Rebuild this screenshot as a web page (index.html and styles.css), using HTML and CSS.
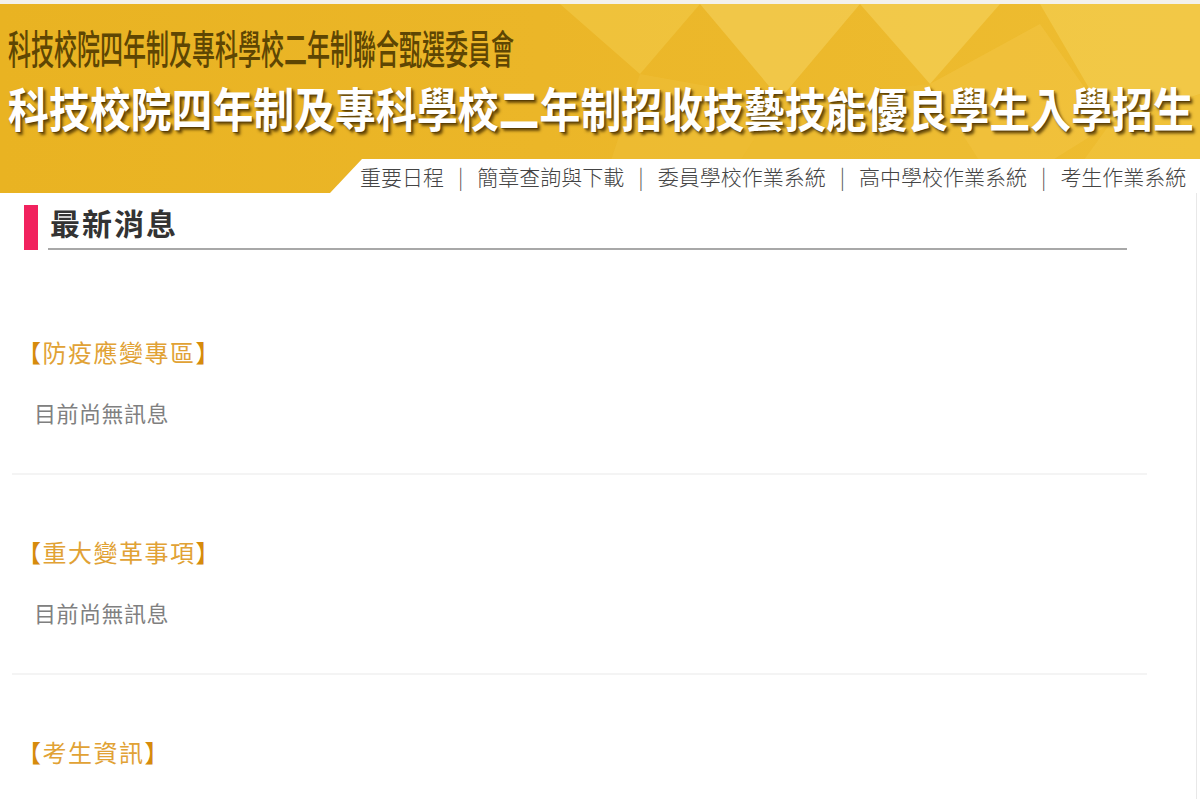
FILE: index.html
```html
<!DOCTYPE html>
<html lang="zh-Hant">
<head>
    <meta charset="UTF-8">
    <meta name="viewport" content="width=device-width, initial-scale=1.0">
    <title>科技校院四年制及專科學校二年制招收技藝技能優良學生入學招生</title>
    <link rel="stylesheet" href="styles.css">
</head>
<body>

<header class="banner">
    <svg class="banner-deco" width="1200" height="189" viewBox="0 0 1200 189" aria-hidden="true">
        <polygon points="560,0 700,0 640,70" fill="#f4cd4e" opacity="0.5"/>
        <polygon points="700,0 860,0 780,95" fill="#f6d460" opacity="0.55"/>
        <polygon points="640,70 780,95 720,189 600,189" fill="#f0c23c" opacity="0.45"/>
        <polygon points="860,0 1000,0 930,80" fill="#f7d866" opacity="0.5"/>
        <polygon points="930,80 1040,20 1110,120 1000,189" fill="#f3c849" opacity="0.45"/>
        <polygon points="1040,0 1200,0 1200,90 1110,120" fill="#f6d35c" opacity="0.5"/>
        <polygon points="1110,120 1200,90 1200,189 1060,189" fill="#f2c744" opacity="0.45"/>
        <polygon points="780,95 930,80 1000,189 720,189" fill="#efc03a" opacity="0.35"/>
    </svg>
    <div class="org"><span>科技校院四年制及專科學校二年制聯合甄選委員會</span></div>
    <div class="slogan"><span>科技校院四年制及專科學校二年制招收技藝技能優良學生入學招生</span></div>
    <nav class="topnav">
        <a href="#">重要日程</a><span class="sep">|</span>
        <a href="#">簡章查詢與下載</a><span class="sep">|</span>
        <a href="#">委員學校作業系統</a><span class="sep">|</span>
        <a href="#">高中學校作業系統</a><span class="sep">|</span>
        <a href="#">考生作業系統</a>
    </nav>
</header>

<main class="page">
    <div class="news-head">
        <span class="news-bar"></span>
        <h2>最新消息</h2>
    </div>

    <section class="news-block">
        <h3><b>【</b>防疫應變專區<b>】</b></h3>
        <p>目前尚無訊息</p>
    </section>

    <section class="news-block">
        <h3><b>【</b>重大變革事項<b>】</b></h3>
        <p>目前尚無訊息</p>
    </section>

    <section class="news-block">
        <h3><b>【</b>考生資訊<b>】</b></h3>
    </section>
</main>

</body>
</html>
```

FILE: styles.css
```css
body {
    font-family: "Noto Sans CJK TC", "Noto Sans", sans-serif;
    margin: 0;
    padding: 0;
    background-color: #fff;
    overflow-x: hidden;
}
.banner {
    position: relative;
    height: 189px;
    border-top: 4px solid #f3f1ec;
    background: linear-gradient(90deg, #e9b322 0%, #ebb628 45%, #eebd31 100%);
    display: flex;
    flex-direction: column;
    overflow: hidden;
}
.banner-deco {
    position: absolute;
    top: 0;
    left: 0;
}
.org, .slogan {
    position: relative;
    white-space: nowrap;
    margin-left: 8px;
}
.org {
    margin-top: 23px;
    height: 40px;
    line-height: 40px;
    font-size: 40px;
    font-weight: 500;
    color: #5e4603;
}
.org span {
    display: inline-block;
    transform: scaleX(0.575);
    transform-origin: left center;
}
.slogan {
    margin-top: 14px;
    height: 52px;
    line-height: 52px;
    font-size: 47px;
    font-weight: 700;
    color: #fff;
    text-shadow: 3px 3px 3px rgba(70, 45, 0, 0.75), 1px 1px 1px rgba(70, 45, 0, 0.6);
}
.slogan span {
    display: inline-block;
    transform: scaleX(0.87);
    transform-origin: left center;
}
.topnav {
    position: relative;
    margin-top: auto;
    margin-left: auto;
    width: 840px;
    height: 34px;
    padding-left: 30px;
    background: #fff;
    clip-path: polygon(32px 0, 100% 0, 100% 100%, 0 100%);
    display: flex;
    align-items: center;
    font-size: 21px;
    font-weight: 300;
    line-height: 34px;
    color: #444;
}
.topnav a {
    color: #444;
    text-decoration: none;
}
.topnav .sep {
    margin: 0 14px;
    color: #555;
}
.page {
    width: 1196px;
    min-height: 606px;
    border-right: 1px solid #e8e8e8;
    padding-top: 12px;
}
.news-head {
    display: flex;
    width: 1103px;
    margin-left: 24px;
    margin-bottom: 25px;
}
.news-bar {
    width: 14px;
    height: 45px;
    background-color: #f1225e;
}
.news-head h2 {
    flex: 1;
    margin: 0 0 0 10px;
    padding: 0 0 9px 2px;
    height: 34px;
    line-height: 34px;
    font-size: 30px;
    font-weight: 700;
    letter-spacing: 2px;
    color: #333;
    border-bottom: 2px solid #a8a8a8;
}
.news-block {
    width: 1135px;
    margin-left: 12px;
    padding: 61px 0 46px;
    border-bottom: 2px solid #f4f4f4;
}
.news-block h3 {
    margin: 0;
    padding-left: 5px;
    height: 32px;
    line-height: 32px;
    font-size: 24px;
    font-weight: 400;
    letter-spacing: 1.5px;
    color: #e1a235;
}
.news-block h3 b {
    font-weight: 400;
    color: #d68b0c;
}
.news-block p {
    margin: 29px 0 0;
    padding-left: 22px;
    height: 30px;
    line-height: 30px;
    font-size: 22px;
    letter-spacing: 0.5px;
    color: #808080;
}
```
